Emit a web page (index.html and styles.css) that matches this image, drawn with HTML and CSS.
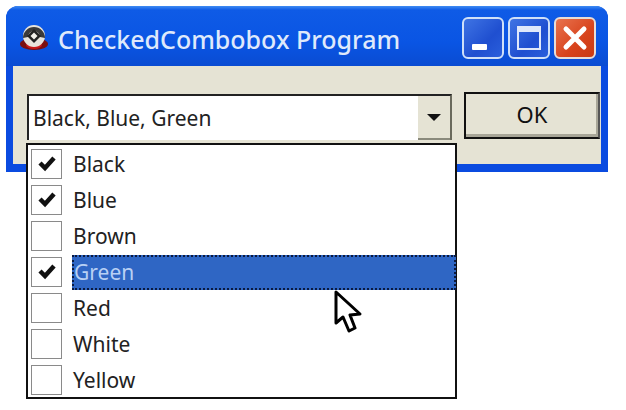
FILE: index.html
```html
<!DOCTYPE html>
<html lang="en">
<head>
  <meta charset="UTF-8" />
  <title>CheckedCombobox Program</title>
  <link rel="stylesheet" href="styles.css">
</head>
<body>

<div class="window">
  <div class="title-bar">
    <svg class="app-icon" width="30" height="26" viewBox="0 0 30 26">
      <ellipse cx="15" cy="19" rx="14" ry="6" fill="#7a1010"/>
      <ellipse cx="15" cy="20" rx="8" ry="4" fill="#c81818"/>
      <circle cx="15" cy="11" r="11" fill="#e8e4dc"/>
      <path d="M4 13 a11 11 0 0 1 22 0 l-5 -1 a6 6 0 0 0 -12 0 z" fill="#3a3a3a"/>
      <path d="M15 4 l7 7 l-7 7 l-7 -7 z" fill="#222"/>
      <path d="M15 7.5 l3.5 3.5 l-3.5 3.5 l-3.5 -3.5 z" fill="#f2f0ea"/>
    </svg>
    <div class="title-text">CheckedCombobox Program</div>
    <div class="caption-buttons">
      <div class="cap-btn"><span class="min-glyph"></span></div>
      <div class="cap-btn"><span class="max-glyph"></span></div>
      <div class="cap-btn cap-close">
        <svg width="26" height="26" viewBox="0 0 26 26"><path d="M4 4 L22 22 M22 4 L4 22" stroke="#fff" stroke-width="5" stroke-linecap="round"/></svg>
      </div>
    </div>
  </div>

  <div class="client">
    <div class="combo">
      <div class="combo-text">Black, Blue, Green</div>
      <div class="combo-arrow"><span class="arrow-glyph"></span></div>
    </div>
    <div class="ok-btn">OK</div>
  </div>

  <div class="dropdown">
    <div class="item"><div class="box"><svg width="18" height="16" viewBox="0 0 18 16"><path d="M2 7 L7 12 L16 2" fill="none" stroke="#111" stroke-width="4.5"/></svg></div><div class="label">Black</div></div>
    <div class="item"><div class="box"><svg width="18" height="16" viewBox="0 0 18 16"><path d="M2 7 L7 12 L16 2" fill="none" stroke="#111" stroke-width="4.5"/></svg></div><div class="label">Blue</div></div>
    <div class="item"><div class="box"></div><div class="label">Brown</div></div>
    <div class="item selected"><div class="box"><svg width="18" height="16" viewBox="0 0 18 16"><path d="M2 7 L7 12 L16 2" fill="none" stroke="#111" stroke-width="4.5"/></svg></div><div class="label">Green</div></div>
    <div class="item"><div class="box"></div><div class="label">Red</div></div>
    <div class="item"><div class="box"></div><div class="label">White</div></div>
    <div class="item"><div class="box"></div><div class="label">Yellow</div></div>

    <svg class="cursor" width="28" height="44" viewBox="0 0 28 44">
      <path d="M2 2 L2 33 L9 27 L15 41 L21 38 L16 25 L26 24 Z" fill="#fff" stroke="#000" stroke-width="3" stroke-linejoin="round"/>
    </svg>
  </div>
</div>

</body>
</html>
```

FILE: styles.css
```css
* { box-sizing: border-box; }

body {
  margin: 0;
  padding: 6px;
  min-height: 410px;
  background: #fff;
  font-family: "Noto Sans", Tahoma, sans-serif;
  color: #111;
}

.window {
  position: relative;
  width: 602px;
  height: 166px;
  background: #0a4be0;
  border-radius: 12px 12px 0 0;
  padding: 0 7px 8px 7px;
  display: flex;
  flex-direction: column;
  filter: blur(0.5px);
}

.title-bar {
  height: 60px;
  display: flex;
  align-items: center;
  background: linear-gradient(#3f8cf3, #0f5be6 4px, #0a55e4 60%, #0a4cd2);
  margin: 0 -7px;
  padding: 4px 12px 0 13px;
  border-radius: 12px 12px 0 0;
}

.app-icon { flex: none; margin-right: 9px; }

.title-text {
  flex: 1;
  margin-top: 2px;
  color: #dfe9fb;
  font-size: 25px;
  font-weight: 500;
  white-space: nowrap;
}

.caption-buttons { display: flex; gap: 4px; }

.cap-btn {
  width: 42px;
  height: 42px;
  border: 2px solid #cfe0f8;
  border-radius: 6px;
  background: linear-gradient(135deg, #3f74e4, #1f4fd0 60%, #2a5fdc);
  position: relative;
  display: flex;
  align-items: center;
  justify-content: center;
}

.min-glyph {
  position: absolute;
  left: 8px;
  bottom: 7px;
  width: 15px;
  height: 6px;
  background: #fff;
  border-radius: 1px;
}

.max-glyph {
  width: 24px;
  height: 24px;
  border: 2px solid #dfe8fa;
  border-top-width: 6px;
}

.cap-close {
  background: linear-gradient(135deg, #e8734f, #d8431c 60%, #c83a14);
  border-color: #e8dcd6;
}

.client {
  flex: 1;
  background: #e5e3d4;
  padding: 26px 0 0 14px;
  display: flex;
  align-items: flex-start;
}

.combo {
  width: 425px;
  height: 46px;
  margin-top: 2px;
  display: flex;
  background: #fff;
  border: 2px solid;
  border-color: #222 #6a6a5c #8a8a7c #222;
  border-bottom: none;
}

.combo-text {
  flex: 1;
  font-size: 21px;
  line-height: 44px;
  padding-left: 4px;
  color: #222;
}

.combo-arrow {
  width: 32px;
  background: #e5e3d4;
  border-bottom: 2px solid #8a8a7c;
  display: flex;
  align-items: center;
  justify-content: center;
}

.arrow-glyph {
  width: 0;
  height: 0;
  border-left: 7px solid transparent;
  border-right: 7px solid transparent;
  border-top: 7px solid #111;
}

.ok-btn {
  width: 136px;
  height: 47px;
  margin-left: 12px;
  background: #e5e3d4;
  border: 2px solid #111;
  border-right-color: #555;
  box-shadow: inset -2px -3px 0 #a8a698;
  font-size: 22px;
  line-height: 40px;
  text-align: center;
}

.dropdown {
  position: absolute;
  left: 20px;
  top: 137px;
  width: 431px;
  height: 256px;
  background: #fff;
  border: 2px solid #111;
  padding: 1px 0 0 3px;
}

.item {
  height: 36px;
  display: flex;
  align-items: center;
}

.box {
  flex: none;
  width: 31px;
  height: 30px;
  border: 1px solid #8a8a8a;
  display: flex;
  align-items: center;
  justify-content: center;
}

.label {
  flex: 1;
  height: 35px;
  margin-left: 10px;
  padding-left: 1px;
  font-size: 21px;
  line-height: 34px;
  color: #222;
}

.selected .label {
  background: #2f66c4;
  color: #b8d0f4;
  border: 2px dotted #0a1a40;
  margin-right: -1px;
  padding-left: 0;
  line-height: 30px;
}

.cursor {
  position: absolute;
  left: 306px;
  top: 145px;
}
```
